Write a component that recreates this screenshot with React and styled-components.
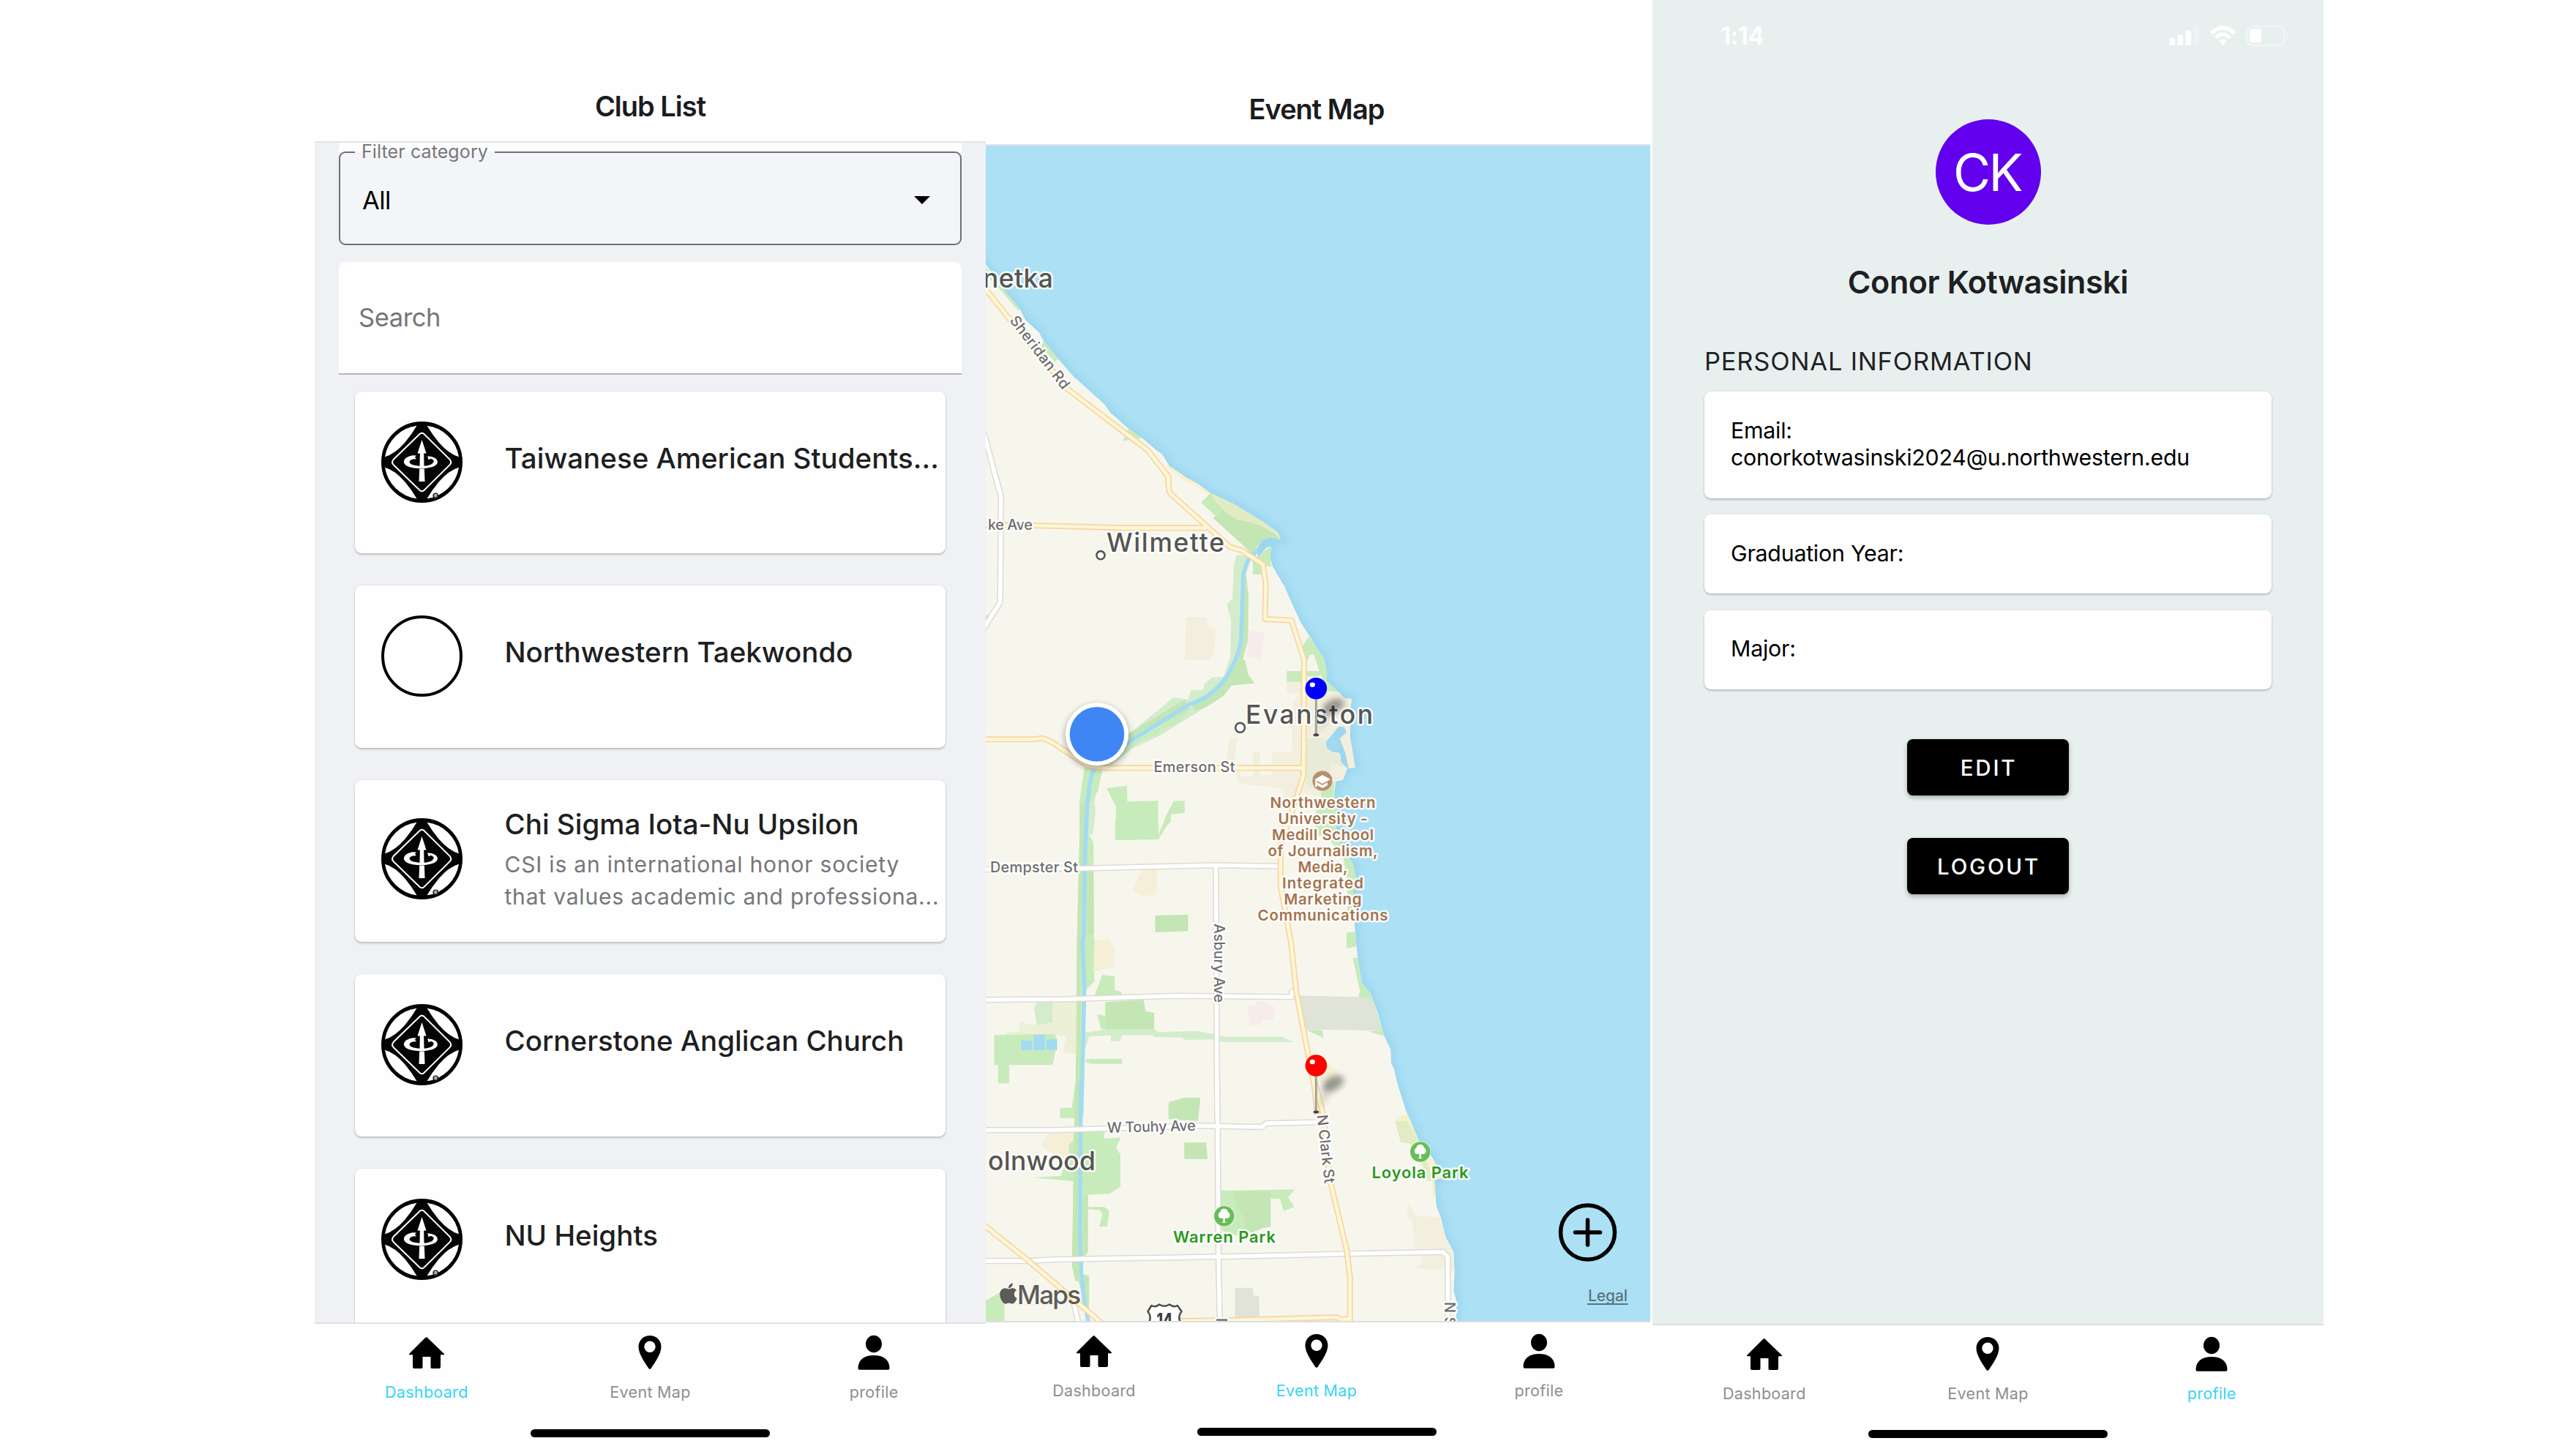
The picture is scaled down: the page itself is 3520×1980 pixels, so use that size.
import React from "react";
import styled, { createGlobalStyle } from "styled-components";
import { FaApple } from "react-icons/fa";

const GlobalStyle = createGlobalStyle`
  * { box-sizing: border-box; }
  body { margin: 0; background: #fff; font-family: Inter, "Liberation Sans", sans-serif; }
`;

/* ---------- shared layout ---------- */

const Stage = styled.main`
  display: flex;
  width: 3520px;
  height: 1980px;
  padding-left: 430px;
  overflow: hidden;
  background: #fff;
`;

const Screen = styled.section`
  display: flex;
  flex-direction: column;
  flex: none;
  width: ${(p) => p.$width}px;
  height: 1980px;
  margin-left: ${(p) => p.$shift || 0}px;
  background: ${(p) => p.$bg || "#fefefe"};
  ${(p) => p.$front && "position: relative; z-index: 1;"}
`;

const Header = styled.header`
  flex: none;
  height: ${(p) => p.$height}px;
  padding-top: ${(p) => p.$height - 74}px;
  border-bottom: 2px solid #e3e4e5;
`;

const HeaderTitle = styled.h1`
  margin: 0;
  font-size: 38px;
  line-height: 48px;
  font-weight: 600;
  letter-spacing: -1px;
  text-align: center;
  color: #1b1c1f;
`;

/* ---------- tab bar ---------- */

const TabBarBox = styled.nav`
  flex: none;
  height: ${(p) => p.$height}px;
  background: #fefefe;
  border-top: 2px solid #dedfe0;
`;

const Tabs = styled.div`
  display: grid;
  grid-template-columns: repeat(3, 1fr);
  height: 143.500px;
  padding-top: 13px;
`;

const Tab = styled.div`
  display: flex;
  flex-direction: column;
  align-items: center;
  gap: 12px;
  font-size: 21.5px;
  line-height: 28px;
  letter-spacing: 0.3px;
  color: ${(p) => (p.$active ? "#38d4f8" : "#8d8e91")};
`;

const TabSvg = styled.svg`
  display: block;
  width: 54px;
  height: 54px;
`;

const HomeIndicator = styled.div`
  width: 327px;
  height: 11px;
  margin: 0 auto;
  border-radius: 6px;
  background: #000;
`;

const icons = {
  Dashboard: <path d="M27 5 L51 28 Q51.500 29.300 50 29.300 H46 V46 Q46 48 44 48 H34 Q32.500 48 32.500 46 V32 H21.500 V46 Q21.500 48 20 48 H10 Q8 48 8 46 V29.300 H4 Q2.500 29.300 3 28 L24.500 6.500 Q27 4 29.500 6.500Z" />,
  "Event Map": <path fillRule="evenodd" d="M27 3 C18 3 11.500 9.500 11.500 18.500 C11.500 29 22 42 25 47.500 Q27 50 29 47.500 C32 42 42.500 29 42.500 18.500 C42.500 9.500 36 3 27 3Z M27 10.500 a7.700 7.700 0 1 1 0 15.400 a7.700 7.700 0 1 1 0 -15.400Z" />,
  profile: (
    <>
      <ellipse cx="27" cy="14.500" rx="11" ry="11.800" />
      <path d="M5.500 47.500 C5.500 36 14 30 27 30 C40 30 48.500 36 48.500 47.500 Q48.500 49.700 46.500 49.700 H7.500 Q5.500 49.700 5.500 47.500Z" />
    </>
  ),
};

function TabBar({ active, height }) {
  return (
    <TabBarBox $height={height}>
      <Tabs>
        {Object.keys(icons).map((name) => (
          <Tab key={name} $active={name === active}>
            <TabSvg viewBox="0 0 54 54" fill="#000">{icons[name]}</TabSvg>
            {name}
          </Tab>
        ))}
      </Tabs>
      <HomeIndicator />
    </TabBarBox>
  );
}

/* ---------- club list ---------- */

const ListArea = styled.div`
  flex: 1;
  min-height: 0;
  overflow: hidden;
  padding: 0 33px;
  background: #f0f1f4;
`;

const FilterWrap = styled.div`
  height: 140.500px;
  background: linear-gradient(#fdfdfe 0 13px, transparent 13px);
`;

const FilterField = styled.fieldset`
  height: 140px;
  margin: 0;
  padding: 0 20px;
  border: 2.500px solid #6d7073;
  border-radius: 9px;
  background: #f4f5f8;
`;

const FilterLegend = styled.legend`
  width: 191px;
  padding: 0 9px;
  font-size: 25px;
  line-height: 25px;
  letter-spacing: 0.1px;
  white-space: nowrap;
  color: #76787b;
`;

const FilterValue = styled.div`
  display: flex;
  align-items: center;
  justify-content: space-between;
  height: 106px;
  padding: 0 21px 0 10px;
  font-size: 34.500px;
  letter-spacing: -0.6px;
  color: #000;
`;

const Caret = styled.span`
  width: 0;
  height: 0;
  border: 11px solid transparent;
  border-top-color: #000;
  border-bottom: 0;
`;

const SearchBox = styled.div`
  display: flex;
  align-items: center;
  height: 154px;
  margin-top: 22px;
  padding: 0 27px;
  border-bottom: 2.500px solid #b4b6b8;
  border-radius: 9px 9px 0 0;
  background: #fefefe;
  font-size: 34.500px;
  letter-spacing: -0.4px;
  color: #747678;
`;

const Cards = styled.div`
  display: flex;
  flex-direction: column;
  gap: 44px;
  padding: 23px 22px 0;
`;

const ClubCard = styled.article`
  display: flex;
  flex: none;
  gap: 57.500px;
  height: 221.500px;
  padding: ${(p) => (p.$detailed ? 52.5 : 41)}px 0 0 36px;
  border-radius: 9px;
  background: #fefefe;
  box-shadow: 0 2px 3px rgba(0, 0, 0, 0.2), 0 0 3px rgba(0, 0, 0, 0.08);
`;

const ClubLogo = styled.svg`
  display: block;
  flex: none;
  width: 111px;
  height: 111px;
`;

const ClubText = styled.div`
  margin-top: ${(p) => (p.$detailed ? -18.5 : 24)}px;
  white-space: nowrap;
`;

const ClubName = styled.h2`
  margin: 0;
  font-size: 38.500px;
  line-height: 52px;
  font-weight: 500;
  color: #1d1f22;
`;

const ClubInfo = styled.p`
  margin: 7px 0 0;
  font-size: 30px;
  line-height: 44px;
  letter-spacing: 0.8px;
  white-space: pre;
  color: #757779;
`;

const corner = "M208 64 A152 152 0 0 0 78 191 Q118 180 160 132 Q188 98 208 64Z";

function Emblem({ blank }) {
  return (
    <ClubLogo viewBox="63 47 332 332">
      <circle cx="229" cy="213" r="160" fill={blank ? "#fff" : "#040404"} stroke="#000" strokeWidth="12" />
      {!blank && (
        <g fill="#fff">
          <path d={corner} />
          <path d={corner} transform="translate(458 0) scale(-1 1)" />
          <path d={corner} transform="translate(0 426) scale(1 -1)" />
          <path d={corner} transform="translate(458 426) scale(-1 -1)" />
          <path fill="none" stroke="#fff" strokeWidth="6" d="M221 97 Q229 91 237 97 L343 202 Q353 213 343 224 L237 329 Q229 335 221 329 L113 224 Q103 213 113 202Z" />
          <path d="M229 122 L247 177 H237 L238 230 H220 L221 177 H211Z M219 240 H239 L241 292 H217Z" />
          <path d="M207 186 L190 185 Q155 192 155 212 Q159 238 226 239 Q292 236 293 212 Q292 196 268 191 L284 193 L252 188 L256 203 L266 199 Q280 204 277 212 Q270 228 229 229 Q181 227 178 212 Q180 202 198 200 L207 200 L200 193Z" />
          <circle cx="285" cy="350" r="10" fill="#555" stroke="#111" strokeWidth="3" />
          <text x="285" y="356" fontSize="16" fontWeight="700" fill="#ddd" textAnchor="middle">R</text>
        </g>
      )}
    </ClubLogo>
  );
}

const clubs = [
  { name: "Taiwanese American Students..." },
  { name: "Northwestern Taekwondo", blank: true },
  { name: "Chi Sigma Iota-Nu Upsilon", info: "CSI is an international honor society\nthat values academic and professiona..." },
  { name: "Cornerstone Anglican Church" },
  { name: "NU Heights" },
];

function ClubList() {
  return (
    <Screen $width={917} $front>
      <Header $height={195}>
        <HeaderTitle>Club List</HeaderTitle>
      </Header>
      <ListArea>
        <FilterWrap>
          <FilterField>
            <FilterLegend>Filter category</FilterLegend>
            <FilterValue>
              All
              <Caret />
            </FilterValue>
          </FilterField>
        </FilterWrap>
        <SearchBox>Search</SearchBox>
        <Cards>
          {clubs.map((club) => (
            <ClubCard key={club.name} $detailed={!!club.info}>
              <Emblem blank={club.blank} />
              <ClubText $detailed={!!club.info}>
                <ClubName>{club.name}</ClubName>
                {club.info && <ClubInfo>{club.info}</ClubInfo>}
              </ClubText>
            </ClubCard>
          ))}
        </Cards>
      </ListArea>
      <TabBar active="Dashboard" height={173} />
    </Screen>
  );
}

/* ---------- event map ---------- */

const MapSvg = styled.svg`
  display: block;
  flex: none;
  width: 912px;
  height: 1606px;
  background: #abe0f5;
`;

const Shape = styled.path`
  fill: ${(p) => p.$fill};
`;

const Line = styled.path`
  fill: none;
  stroke: ${(p) => p.$color};
  stroke-width: ${(p) => p.$w}px;
  stroke-linejoin: round;
  vector-effect: non-scaling-stroke;
`;

const Label = styled.text`
  font-size: ${(p) => p.$size}px;
  font-weight: ${(p) => p.$weight || 500};
  fill: ${(p) => p.$color};
  stroke: rgba(255, 255, 255, 0.9);
  stroke-width: 5px;
  stroke-linejoin: round;
  paint-order: stroke;
`;

const C = {
  land: "#f7f6ed",
  park: "#c8ebbb",
  deep: "#c3e6b4",
  pale: "#d3edcc",
  tan: "#f3efdf",
  sand: "#f6efd8",
  pink: "#f7ecea",
  beach: "#f7f1ca",
  meadow: "#e1ebc4",
  grey: "#dfe3d8",
  campus: "#e9ebd9",
  river: "#a3dbf3",
};

const coast =
  "M-4 155 L0 162 L22.7 195 L46.400 223 L54 238 L73 255.600 L79 267 L98.600 291 L120.500 316 L162 353 L170 364.500 L194.700 386.600 L213.600 399.500 L233 416 L241 421.600 L251 438 L274.700 454 L288 461 L307 474.700 L340 490 L378.500 513.700 L399 528 L403.400 538.700 L390 535 L377 539 L370 552 L372 562 L384 549 L390 548 L388.600 563.700 L392 575 L408 602 L419 627 L430.600 652 L443.700 672 L452.600 687 L462.700 702 L466 720 L466 732 L482 747 L490 754.700 L500 756 L497.700 775 L498 808.700 L504.800 850 L496 851 L491 828.700 L484 810 L493 802 L490 793.700 L482 794 L464.500 815 L466 823.700 L474.500 829 L484 830 L485 842 L494 851 L488 867 L478 868.700 L476 887 L479 897 L479 942 L482 948.700 L502 982 L506 1002 L502 1018.700 L504 1065 L508 1108.700 L513.600 1143.700 L525.500 1158 L535.600 1185 L544.500 1217 L553.400 1235 L554 1253.700 L558 1262 L562 1280 L574 1318 L577 1325 L592 1360 L609.700 1382 L617 1395 L622.800 1411 L613 1413 L615.700 1448.700 L621.600 1463.700 L628.700 1492 L639.400 1512 L640.600 1538.700 L639.400 1565 L643 1578.700 L643 1606 L-4 1606Z";

/* Each tile holds its own survey grid; ky is the vertical size of one grid unit. */
const tiles = [
  {
    y: -98,
    ky: 1 / 2.8,
    areas: [
      ["park", "M12 740 L50 820 L92 900 L85 903 L40 815 L12 770Z"],
      ["park", "M145 1020 L178 1090 L172 1102 L140 1045Z"],
      ["park", "M340 1357 L374 1393 L328 1404Z"],
      ["beach", "M435 1500 L497 1568 L480 1568 L425 1500Z"],
    ],
    local: ["M0 1340 L12 1400 L42 1590"],
    main: ["M5 810 L70 945 L200 1205 L385 1440 L432 1540 V1580"],
  },
  {
    y: 442,
    ky: 1 / 3,
    areas: [
      ["beach", "M435 -10 L452 -8 L535 98 L525 105Z"],
      ["deep", "M530 98 L508 137 L555 175 L535 200 L602 308 L625 350 L645 300 L665 282 L692 290 L685 258 L650 215 L585 145Z"],
      ["park", "M530 112 L508 137 L545 198 L555 172 L537 125Z"],
      ["meadow", "M530 98 L585 145 L650 215 L688 258 L692 290 Q655 225 592 208 Q560 180 535 120Z"],
      ["park", "M640 350 L668 318 L668 390 L672 400 L650 398 V432 H627 V380Z"],
      ["pale", "M590 350 L625 360 L612 430 L617 700 L600 790 L575 885 L520 975 L410 1095 L350 1145 L300 1215 L275 1230 L262 1370 L265 1400 L258 1500 H228 V1370 L232 1300 L240 1215 L320 1150 L345 1080 L445 935 L478 945 L485 905 L512 905 L515 880 L535 853 L560 852 L575 770 L577 620 L567 555 L580 530 L583 400Z"],
      ["deep", "M605 440 L612 435 L617 520 L616 700 L604 780 L610 785 L616 840 L631 878 L578 887 L560 930 L520 975 L495 990 L487 965 L530 920 L570 850 L592 770 L600 700Z"],
      ["deep", "M470 945 L482 985 L345 1115 L340 1085Z"],
      ["park", "M480 985 L460 1035 L412 1070 V1095 L380 1100 L320 1180 L310 1170 L345 1125Z"],
      ["park", "M240 1215 L282 1220 L270 1320 L250 1370 L228 1370Z"],
      ["deep", "M228 1370 H242 V1500 H228Z"],
      ["park", "M12 598 H22 L12 640Z"],
      ["park", "M290 1308 L337 1298 L338 1363 L409 1360 V1502 H310 L312 1385Z"],
      ["park", "M445 1360 H470 V1410 L438 1415 V1445 L424 1470 L416 1502 H409 L430 1410Z"],
      ["tan", "M473 606 H519 L527 655 H541 L539 755 L525 782 H470Z"],
      ["pink", "M617 663 L655 668 L646 782 L612 768Z"],
      ["tan", "M705 872 H742 V1260 L725 1345 L697 1350 V1310 L597 1288 L583 1230 L565 1195 L573 1105 H591 L585 1190 L600 1260 H627 V1158 H644 V1255 H671 V1158 H716 L720 960 L733 917 H705Z"],
      ["tan", "M750 905 L825 915 L838 938 H855 L851 1050 L862 1225 H848 L828 1105 L843 1080 L838 1055 H825 L795 1120 L800 1150 L828 1165 L845 1228 L835 1275 L815 1280 L790 1345 L740 1330Z"],
      ["campus", "M750 1105 H795 V1150 L828 1165 L845 1228 L810 1200 L800 1275 L770 1310 L750 1300Z"],
      ["park", "M756 685 L792 780 L797 835 L825 915 L800 910 L780 830 L768 760 L758 762 L750 800 L742 725Z"],
      ["park", "M705 828 H785 L780 850 H748 V872 H705Z"],
      ["park", "M785 1300 L815 1280 L813 1335 L820 1365 V1502 H770 L772 1400 L785 1350Z"],
    ],
    water: ["M640 330 L615 375 L605 430 L600 700 Q595 770 565 855 Q530 940 480 965 L345 1115 L262 1230 Q245 1280 243 1510"],
    local: ["M28 -10 L47 110 L45 545 L5 660"],
    main: [
      "M5 228 L120 231 L330 241 H520",
      "M5 1108 H120 L143 1103 L165 1120 L245 1215 L285 1225 H742",
      "M415 -10 L433 35 L434 90 L440 105 L575 320 L600 332 L650 390 L657 470 L655 615 L716 620 L745 780 L744 1255 L698 1510",
    ],
  },
  {
    y: 922,
    ky: 1 / 3,
    areas: [
      ["park", "M228 60 L222 490 L221 850 L218 1202 H232 L240 700 L262 660 L260 90 L250 60Z"],
      ["deep", "M228 60 H238 L236 480 L230 500 V1202 H218 L222 490Z"],
      ["deep", "M246 205 H260 V465 L246 468Z"],
      ["park", "M310 60 H415 L437 0 V5 L420 32 L410 78 L310 82Z"],
      ["park", "M310 0 H409 V60 H310Z"],
      ["sand", "M372 200 H407 L405 305 L372 310 L351 285Z"],
      ["deep", "M402 390 L478 386 V454 L402 459Z"],
      ["sand", "M262 488 H296 L308 525 V600 L260 620Z"],
      ["park", "M280 633 L309 640 V695 L323 702 L327 718 L262 722Z"],
      ["deep", "M287 745 L375 735 L380 782 L400 790 V857 H287 V800Z"],
      ["park", "M268 795 L287 800 V857 L278 857Z"],
      ["pale", "M240 870 L290 857 H400 L410 868 L500 863 L565 887 H695 L722 909 H560 L530 898 L470 900 L465 890 L400 888 L395 880 L326 882 L320 905 H300 V882 L250 885 L240 940Z"],
      ["park", "M245 978 H325 L327 998 H255 L240 990Z"],
      ["meadow", "M166 745 H222 V960 L190 950 L197 885 L100 880 L58 892 L60 870 L90 865 V828 L130 840 L166 825Z", 0.55],
      ["pale", "M130 745 L166 742 V828 L130 840 L123 775Z"],
      ["park", "M31 880 L170 875 L177 900 L166 1003 H66 V1078 H40 V1003 H31Z"],
      ["river", "M93 903 H118 V943 H93Z M122 880 H148 V942 H122Z M152 898 H176 V942 H152Z"],
      ["pink", "M635 740 L660 745 L676 765 V815 L650 820 L645 840 H620 L615 760 L630 758Z"],
      ["park", "M857 563 H868 L878 665 L898 708 L930 885 L893 865 L922 862 L900 738 L870 722 L874 700Z"],
      ["grey", "M735 718 L870 724 L900 738 L923 862 L748 857Z"],
      ["park", "M843 460 L862 457 L867 515 L843 525Z"],
      ["park", "M748 858 L787 860 L790 892Z"],
      ["park", "M790 0 H820 L825 80 L858 180 L865 240 L858 290 V375 H845 V250 L835 150 L805 80Z"],
      ["deep", "M433 1160 L466 1138 H505 L502 1202 H433Z"],
      ["park", "M185 1180 L210 1182 L218 1140 V1202 H185Z"],
      ["sand", "M795 980 L832 1050 L800 1080 L775 1070Z"],
    ],
    water: ["M243 -5 L240 200 L238 470 L235 500 L239 700 L232 1210"],
    local: [
      "M5 201 L230 197 L540 184 L690 188",
      "M542 184 L545 1210",
      "M5 736 L200 733 L450 719 L716 724 L717 702 L725 695",
    ],
    main: ["M706 -5 L691 100 V270 L715 500 L727 700 L748 900 L768 1080 L776 1210"],
  },
  {
    y: 1282,
    ky: 1 / 3,
    areas: [
      ["sand", "M160 200 L214 197 V300 L175 305 L140 250Z"],
      ["park", "M218 0 H232 L234 195 H285 V225 L323 220 L312 262 L322 290 V422 L298 450 L247 455 V505 H285 L296 520 L292 585 H273 L281 535 L275 518 L247 513 V690 L238 710 L234 780 L250 785 V900 L245 971 L236 880 L225 810 L210 750 L214 400 L120 384 L185 378 L195 330 L205 300 L203 250 L213 235 L218 140 H183 V98 H210Z"],
      ["deep", "M218 0 H228 L226 810 L218 808 L211 750 L214 300Z M238 455 H247 V690 L238 710Z M236 790 H249 V930Z"],
      ["deep", "M433 75 L468 58 H506 L501 152 L433 145Z"],
      ["deep", "M469 241 H520 L523 308 H469Z"],
      ["park", "M551 438 L724 433 L708 465 L723 505 L698 522 L690 472 L668 470 V585 L652 590 L600 625 L560 610 L551 570Z"],
      ["deep", "M580 440 H668 V585 L652 590 L607 620 L610 560 L590 500Z"],
      ["grey", "M586 836 H627 L629 868 L641 870 L643 963 H586Z"],
      ["tan", "M985 490 L1003 543 L1058 545 L1072 630 L1090 690 L1092 770 L1065 758 L997 758 L1018 730 L1017 700 L1000 685 L994 555 L982 553Z"],
      ["beach", "M955 152 L970 125 L985 130 L1010 235 L1052 340 L1062 388 L1048 392 L1050 465 L1042 460 L1040 390 L1005 300Z"],
      ["meadow", "M955 152 L983 154 L1012 240 L1045 400 L1025 395 L1010 250 L968 240Z"],
      ["park", "M5 895 L45 855 L55 860 V975 H5Z"],
    ],
    water: ["M231 -5 L229 600 L232 780 L238 880 L248 975"],
    local: [
      "M5 190 H170 L300 183 L500 172 L648 177 L658 162 L785 157",
      "M545 -5 L546 170 L548 709 L551 980",
      "M5 726 L110 726 L170 720 L400 713 L548 709 L840 697 L1065 689 L1076 708 L1077 980",
      "M215 900 L225 980",
    ],
    main: [
      "M770 -5 L790 130 L803 380 L843 680 L851 790 V980",
      "M5 575 L110 725 L285 990",
      "M430 973 L560 970 L820 957 L830 966 L851 962",
    ],
  },
];

const places = [
  ["netka", -4, 194, 96],
  ["Wilmette", 165, 554.7, 161],
  ["Evanston", 355, 789.7, 174],
  ["olnwood", 3, 1400, 147],
];

const streets = [
  ["ke Ave", 3, 524.7, 61, 0],
  ["Emerson St", 229.5, 855.7, 111, 0],
  ["Dempster St", 6, 993, 120, 0],
  ["W Touhy Ave", 166, 1349, 121, -1.5],
  ["Sheridan Rd", 32, 239, 120, 52.5],
  ["Asbury Ave", 311.500, 1063, 108, 90],
  ["N Clark St", 452.500, 1325, 94, 83.5],
];

const campus = [
  ["Northwestern", 144],
  ["University -", 122],
  ["Medill School", 139],
  ["of Journalism,", 150],
  ["Media,", 68],
  ["Integrated", 111],
  ["Marketing", 106],
  ["Communications", 178],
];

function Tree({ x, y }) {
  return (
    <g transform={`translate(${x} ${y})`}>
      <circle r="14.500" fill="#fff" opacity="0.7" />
      <circle r="13.700" fill="#67bd56" />
      <path fill="#fff" d="M0 -10 C4 -10 5 -7.500 5 -6 C9 -4 9 2.500 4.500 3 Q2 3.500 1.300 2 V7.500 L3.500 9 H-3.500 L-1.300 7.500 V2 Q-2 3.500 -4.500 3 C-9 2.500 -9 -4 -5 -6 C-5 -7.500 -4 -10 0 -10Z" />
    </g>
  );
}

function Pin({ x, y, color }) {
  return (
    <g transform={`translate(${x} ${y})`}>
      <ellipse cx="24" cy="24" rx="15" ry="9" fill="#000" opacity="0.38" filter="url(#soft)" transform="rotate(-25 24 24)" />
      <path d="M2 62 L10 26 L26 30Z" fill="#000" opacity="0.14" filter="url(#soft)" />
      <path d="M0 12 V63" stroke="#8f8f8f" strokeWidth="3" />
      <path d="M0 12 V63" stroke="#c5c5c5" strokeWidth="1" />
      <ellipse cx="0" cy="63.500" rx="3.800" ry="2" fill="#444" />
      <circle r="14.800" fill={color} />
      <ellipse cx="-5" cy="-5" rx="3.600" ry="3.200" fill="#fff" />
    </g>
  );
}

function LakeMap() {
  return (
    <MapSvg viewBox="-4 0 912 1606">
      <defs>
        <filter id="soft" x="-50%" y="-50%" width="200%" height="200%">
          <feGaussianBlur stdDeviation="4" />
        </filter>
        <clipPath id="landClip">
          <path d={coast} />
        </clipPath>
      </defs>
      <path d={coast} fill="none" stroke="#9cd7ef" strokeWidth="12" filter="url(#soft)" />
      <path d={coast} fill={C.land} />
      {tiles.map((t) => (
        <g key={t.y} clipPath="url(#landClip)">
          <g transform={`translate(-7 ${t.y}) scale(${1 / 1.686} ${t.ky})`}>
            {t.areas.map(([kind, d, o], i) => (
              <Shape key={i} d={d} $fill={C[kind]} opacity={o} />
            ))}
            {(t.water || []).map((d) => <Line key={d} d={d} $color={C.river} $w={5.5} />)}
          </g>
        </g>
      ))}
      {[
        ["local", "#dddbd3", 8.5],
        ["local", "#ffffff", 5.5],
        ["main", "#f8d3a8", 8],
        ["main", "#fdf8d2", 4.6],
      ].map(([kind, color, w]) =>
        tiles.map((t) => (
          <g key={color + t.y} transform={`translate(-7 ${t.y}) scale(${1 / 1.686} ${t.ky})`}>
            {t[kind].map((d) => <Line key={d} d={d} $color={color} $w={w} />)}
          </g>
        ))
      )}

      {streets.map(([name, x, y, w, r]) => (
        <Label key={name} $size={20} $color="#6c6e6e" textLength={w} transform={`translate(${x} ${y}) rotate(${r})`}>{name}</Label>
      ))}
      <Label $size={20} $color="#6c6e6e" transform="translate(627 1580) rotate(90)">N S</Label>
      <Label $size={20} $color="#6c6e6e" transform="translate(315 1602) rotate(90)">N</Label>

      {[[157, 559.7, 5.6], [347.6, 795.3, 6.4]].map(([x, y, r]) => (
        <circle key={x} cx={x} cy={y} r={r} fill="#fff" stroke="#565752" strokeWidth="2.600" />
      ))}
      {places.map(([name, x, y, w]) => (
        <Label key={name} x={x} y={y} $size={35.5} $weight={550} $color="#555651" textLength={w}>{name}</Label>
      ))}

      <circle cx="460" cy="868" r="14" fill="#b8906c" stroke="#fff" strokeOpacity="0.5" />
      <path fill="#fff" d="M460 860 L471 866 L460 872 L449.500 866Z M453 870 L460 874 L467 870 V874 L460 878 L453 874Z M450.500 867 H452.500 L453 876 H450Z" />
      {campus.map(([line, w], i) => (
        <Label key={line} x={460.5 - w / 2} y={904.7 + i * 22} $size={20.5} $weight={600} $color="#a5734d" textLength={w}>{line}</Label>
      ))}

      <Tree x={593.7} y={1375} />
      <Label x="527.500" y="1411" $size={22} $weight={600} $color="#2d991c" textLength="132">Loyola Park</Label>
      <Tree x={325.7} y={1462.7} />
      <Label x="256" y="1498.700" $size={22} $weight={600} $color="#2d991c" textLength="140">Warren Park</Label>

      <circle cx="152" cy="808" r="44" fill="#000" opacity="0.3" filter="url(#soft)" />
      <circle cx="152" cy="804.300" r="43" fill="#fff" />
      <circle cx="152" cy="804.300" r="37.300" fill="#3f86f5" />

      <Pin x={451.4} y={741.7} color="#0000fe" />
      <Pin x={451.4} y={1257} color="#fe0000" />

      <path d="M226.500 1585 Q232 1588 237 1583.500 Q244 1588 251 1583.500 Q257 1588 262 1585 L267.500 1593 Q262 1600 266 1608 L223 1608 Q227 1600 221.500 1593Z" fill="#fff" stroke="#4b4c4b" strokeWidth="2.500" strokeLinejoin="round" />
      <text x="233.500" y="1614" fontSize="25.500" fontWeight="800" textLength="22" lengthAdjust="spacingAndGlyphs" fill="#3d3e3d">14</text>

      <g transform="translate(15 1552.500)">
        <FaApple size={32} color="#5b5c58" />
      </g>
      <text x="43" y="1582.500" fontSize="35" textLength="87" fill="#5b5c58" fontWeight="500">Maps</text>

      <g fill="none" stroke="#000" strokeLinecap="round">
        <circle cx="822.500" cy="1485" r="37" strokeWidth="5.500" />
        <path d="M805.500 1485 H839.500 M822.500 1468 V1502" strokeWidth="5.500" />
      </g>
      <text x="823" y="1579" fontSize="21" textLength="54" fill="#587480" fontWeight="500">Legal</text>
      <path d="M822 1583 H877.500" stroke="#587480" strokeWidth="2" />
    </MapSvg>
  );
}

function EventMap() {
  return (
    <Screen $width={912} $shift={-4}>
      <Header $height={199}>
        <HeaderTitle>Event Map</HeaderTitle>
      </Header>
      <LakeMap />
      <TabBar active="Event Map" height={175} />
    </Screen>
  );
}

/* ---------- profile ---------- */

const StatusBar = styled.div`
  display: flex;
  align-items: center;
  justify-content: space-between;
  height: 98px;
  padding: 0 50px 0 93px;
  font-size: 33.500px;
  font-weight: 600;
  letter-spacing: -0.5px;
  color: #fff;
`;

const StatusIcons = styled.svg`
  width: 166px;
  height: 30px;
  margin-right: -4px;
`;

const ProfileBody = styled.div`
  flex: 1;
  min-height: 0;
  display: flex;
  flex-direction: column;
  align-items: center;
  padding: 65px 71px 0;
`;

const Avatar = styled.div`
  display: grid;
  place-items: center;
  width: 144px;
  height: 144px;
  padding-right: 2px;
  border-radius: 50%;
  background: #6200ee;
  font-size: 70px;
  letter-spacing: -2.500px;
  color: #fff;
`;

const PersonName = styled.h1`
  margin: 50px 0 0;
  font-size: 43px;
  line-height: 56px;
  font-weight: 600;
  letter-spacing: -0.4px;
  color: #1d2022;
`;

const SectionTitle = styled.h2`
  align-self: stretch;
  margin: 57px 0 17px;
  font-size: 34.500px;
  line-height: 48px;
  font-weight: 400;
  letter-spacing: 0.8px;
  color: #1f2224;
`;

const InfoList = styled.div`
  display: flex;
  flex-direction: column;
  align-self: stretch;
  gap: 22.500px;
`;

const InfoCard = styled.div`
  padding: 34.500px 36px 36px;
  border-radius: 9px;
  background: #fefefe;
  box-shadow: 0 2px 3px rgba(0, 0, 0, 0.2), 0 0 3px rgba(0, 0, 0, 0.06);
  font-size: 30.300px;
  line-height: 37.500px;
  letter-spacing: -0.220px;
  white-space: pre;
  color: #000;
`;

const Actions = styled.div`
  display: flex;
  flex-direction: column;
  gap: 58px;
  margin-top: 68.500px;
`;

const ActionButton = styled.button`
  width: 221px;
  height: 77px;
  padding: 0 0 0 2px;
  border: 0;
  border-radius: 8px;
  background: #000;
  box-shadow: 0 3px 6px rgba(0, 0, 0, 0.28);
  font: 500 29.500px Inter, sans-serif;
  letter-spacing: 2.800px;
  color: #fff;
`;

function Profile() {
  return (
    <Screen $width={917} $shift={3} $bg="#e8f0ef">
      <StatusBar>
        1:14
        <StatusIcons viewBox="0 0 166 30" fill="#fff">
          <rect x="1.700" y="18" width="7.500" height="10" rx="2.500" />
          <rect x="12.700" y="13.500" width="7.500" height="14.500" rx="2.500" />
          <rect x="23.600" y="7.500" width="7.500" height="20.500" rx="2.500" />
          <rect x="34.700" y="2" width="7.500" height="26" rx="2.500" opacity="0.28" />
          <g fill="none" stroke="#fff" strokeWidth="5">
            <path d="M58.500 11.500 Q74.400 -3.500 90.300 11.500" />
            <path d="M64.500 17.500 Q74.400 8.500 84.300 17.500" />
          </g>
          <path d="M69 22 Q74.400 18 79.800 22 L74.400 28Z" />
          <rect x="107.500" y="2" width="51" height="26" rx="8" fill="none" stroke="#fff" strokeOpacity="0.4" strokeWidth="2.400" />
          <rect x="110.800" y="5.500" width="16.200" height="18.500" rx="4" />
          <path d="M162 10.500 Q166 15 162 19.500Z" opacity="0.4" />
        </StatusIcons>
      </StatusBar>
      <ProfileBody>
        <Avatar>CK</Avatar>
        <PersonName>Conor Kotwasinski</PersonName>
        <SectionTitle>PERSONAL INFORMATION</SectionTitle>
        <InfoList>
          <InfoCard>{"Email:\nconorkotwasinski2024@u.northwestern.edu"}</InfoCard>
          <InfoCard>Graduation Year:</InfoCard>
          <InfoCard>Major:</InfoCard>
        </InfoList>
        <Actions>
          <ActionButton>EDIT</ActionButton>
          <ActionButton>LOGOUT</ActionButton>
        </Actions>
      </ProfileBody>
      <TabBar active="profile" height={171.5} />
    </Screen>
  );
}

export default function App() {
  return (
    <>
      <GlobalStyle />
      <Stage>
        <ClubList />
        <EventMap />
        <Profile />
      </Stage>
    </>
  );
}
